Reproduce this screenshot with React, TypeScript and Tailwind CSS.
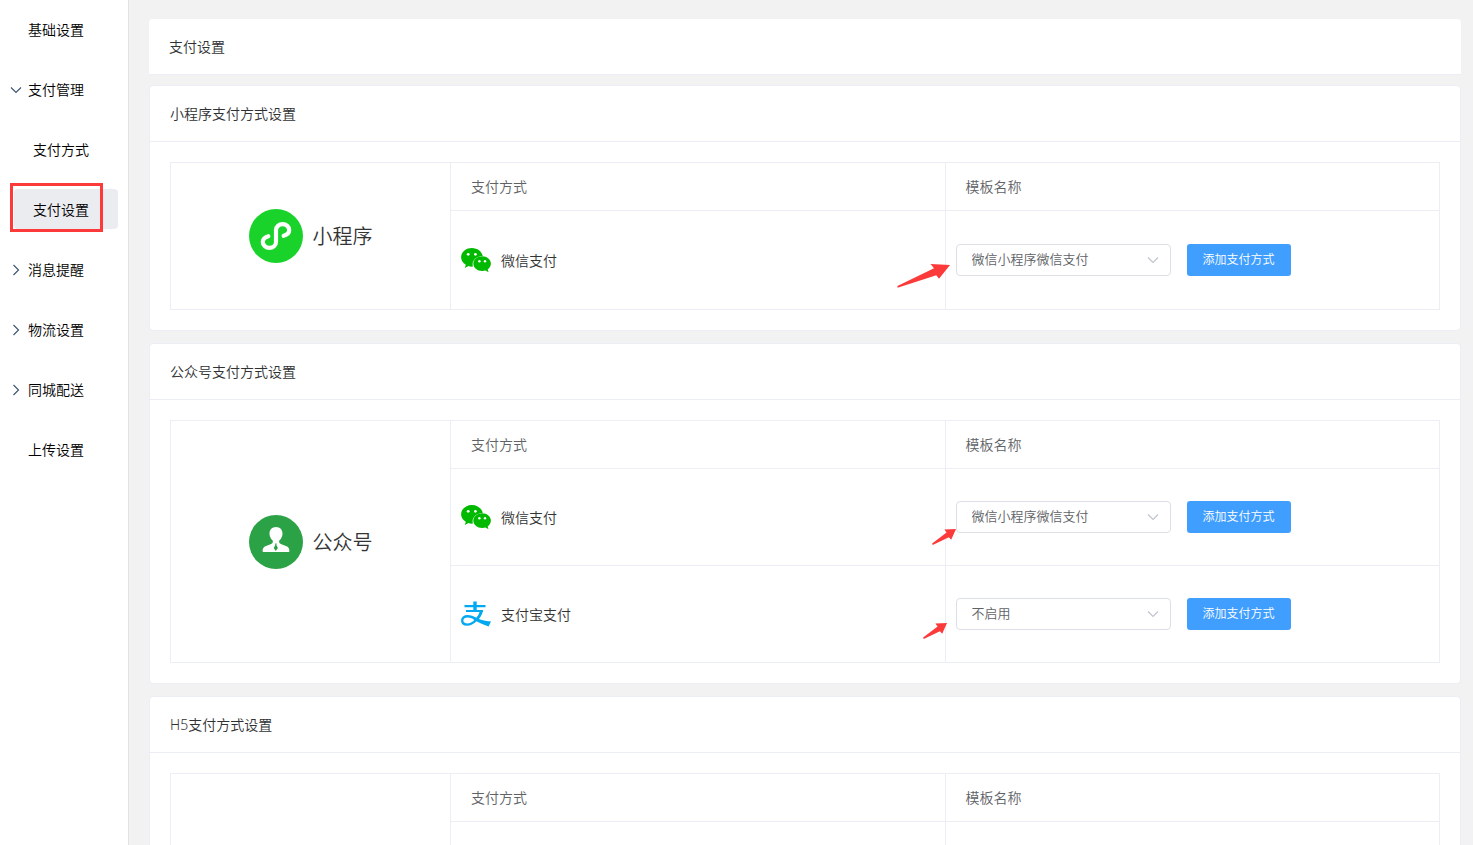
import { ReactNode } from "react";
import clsx from "clsx";

interface NavItem {
  label: string;
  chevron?: "down" | "right";
  child?: boolean;
  active?: boolean;
}

interface PayMethod {
  name: string;
  icon: ReactNode;
  template: string;
  arrow: "large" | "near" | "far";
}

interface Channel {
  title: string;
  label?: string;
  icon?: ReactNode;
  rowClass: string;
  methods: PayMethod[];
}

const navItems: NavItem[] = [
  { label: "基础设置" },
  { label: "支付管理", chevron: "down" },
  { label: "支付方式", child: true },
  { label: "支付设置", child: true, active: true },
  { label: "消息提醒", chevron: "right" },
  { label: "物流设置", chevron: "right" },
  { label: "同城配送", chevron: "right" },
  { label: "上传设置" },
];

const templates = ["微信小程序微信支付", "不启用"];

function Chevron({ className }: { className?: string }) {
  return (
    <svg viewBox="0 0 12 12" fill="none" stroke="currentColor" strokeWidth="1.2" className={clsx("size-3", className)}>
      <path d="M1 3.5 L6 8.5 L11 3.5" />
    </svg>
  );
}

function MiniProgramIcon() {
  return (
    <svg viewBox="0 0 54 54" className="size-[54px]">
      <circle cx="27" cy="27" r="27" fill="#19d32a" />
      <path
        d="M19.3 27.2 C15.8 28.2 13.8 30.3 13.8 33 C13.8 36.2 16.8 38.8 20.4 38.8 C24.1 38.8 27 36.2 27 33 V21 C27 17.8 29.9 15.2 33.6 15.2 C37.2 15.2 40.2 17.8 40.2 21 C40.2 23.7 38.2 25.8 34.7 26.8"
        fill="none"
        stroke="#fff"
        strokeWidth="4.2"
        strokeLinecap="round"
      />
    </svg>
  );
}

function OfficialAccountIcon() {
  return (
    <svg viewBox="0 0 54 54" className="size-[54px]">
      <circle cx="27" cy="27" r="27" fill="#2ba245" />
      <path
        d="M27 12 C30.9 12 33.5 14.8 33.5 18.4 C33.5 21.2 32.3 23.6 30.6 25.2 C29.8 26.2 30 27.8 31 28.4 C33.6 29.8 36.6 30.6 38.6 31.8 C40 32.8 40.4 34.6 40.4 36 C40.4 36.8 40 37.1 39.3 37.1 H14.7 C14 37.1 13.6 36.8 13.6 36 C13.6 34.6 14 32.8 15.4 31.8 C17.4 30.6 20.4 29.8 23 28.4 C24 27.8 24.2 26.2 23.4 25.2 C21.7 23.6 20.5 21.2 20.5 18.4 C20.5 14.8 23.1 12 27 12 Z"
        fill="#fff"
      />
      <path d="M26 28.4 H27.6 L27.4 30 L28.9 33 L26.8 36 L24.7 33 L26.3 30 Z" fill="#2ba245" />
    </svg>
  );
}

function WechatIcon() {
  return (
    <svg viewBox="0 0 30 26" className="h-[26px] w-[30px]">
      <path
        d="M10.9 1 C16.4 1 21 4.6 21.7 9 C16 9 11.6 12.8 11.6 17.2 C11.6 18.1 11.7 18.9 12 19.6 C10.6 19.8 8.9 19.6 7.4 19.1 L3.8 21 L4.8 17.8 C1.9 16 0.1 13.4 0.1 10.3 C0.1 5.2 4.9 1 10.9 1 Z"
        fill="#00b900"
      />
      <path
        d="M21.2 9.2 C26 9.2 29.9 12.5 29.9 16.6 C29.9 19 28.6 21.1 26.7 22.5 L27.5 25.2 L24.5 23.6 C23.5 23.9 22.3 24.1 21.2 24.1 C16.3 24.1 12.3 20.8 12.3 16.6 C12.3 12.5 16.3 9.2 21.2 9.2 Z"
        fill="#00b900"
      />
      <g fill="#fff">
        <circle cx="7.2" cy="7.3" r="1.4" />
        <circle cx="14.4" cy="7.3" r="1.4" />
        <circle cx="18.4" cy="14.3" r="1.2" />
        <circle cx="24" cy="14.3" r="1.2" />
      </g>
    </svg>
  );
}

function AlipayIcon() {
  return (
    <svg viewBox="0 0 30 26" fill="none" stroke="#02a9f1" className="h-[26px] w-[30px]">
      <path d="M3.5 5.2 H24.5 M5 10 H22" strokeWidth="2.2" />
      <path d="M14 0.5 V10" strokeWidth="3.4" />
      <path
        d="M20.4 10 C18.5 16.6 12.5 23.6 6 23.6 C2.8 23.6 1.2 22 1.2 19.6 C1.2 16.8 3.4 15.2 6.6 15.2 C10.8 15.2 14.5 17.6 18 19.4"
        strokeWidth="2.4"
      />
      <path d="M19.2 10 H22 C21.2 13 19.6 16 17.6 18.4 L15.2 17.4 C17.2 15 18.6 12.4 19.2 10 Z" fill="#02a9f1" stroke="none" />
      <path d="M12.6 16.2 C18 18.6 24 19.8 30 20.6 L27.6 25.6 C22 23.6 18 21.6 12.6 19 Z" fill="#02a9f1" stroke="none" />
    </svg>
  );
}

function Arrow({ className }: { className: string }) {
  return (
    <svg viewBox="0 0 53 24" className={clsx("pointer-events-none absolute", className)}>
      <path d="M53 1 L33.5 0 L37 4.2 L0.4 22 L0.6 23.8 L39.3 11.2 L42 14.8 Z" fill="#fc3a3a" />
    </svg>
  );
}

function SmallArrow({ className }: { className: string }) {
  return (
    <svg viewBox="0 0 24 16" className={clsx("pointer-events-none absolute h-4 w-6", className)}>
      <path d="M24 0 L12.4 0.5 L14.6 3.4 L0.1 14.4 L0.7 16 L16.9 8.2 L19.2 10.8 Z" fill="#fc3a3a" />
    </svg>
  );
}

const channels: Channel[] = [
  {
    title: "小程序支付方式设置",
    label: "小程序",
    icon: <MiniProgramIcon />,
    rowClass: "h-[99px]",
    methods: [{ name: "微信支付", icon: <WechatIcon />, template: "微信小程序微信支付", arrow: "large" }],
  },
  {
    title: "公众号支付方式设置",
    label: "公众号",
    icon: <OfficialAccountIcon />,
    rowClass: "h-[97px]",
    methods: [
      { name: "微信支付", icon: <WechatIcon />, template: "微信小程序微信支付", arrow: "near" },
      { name: "支付宝支付", icon: <AlipayIcon />, template: "不启用", arrow: "far" },
    ],
  },
  { title: "H5支付方式设置", rowClass: "h-[97px]", methods: [] },
];

function ChannelCard({ channel }: { channel: Channel }) {
  const rowCount = Math.max(channel.methods.length, 1);

  return (
    <section className="rounded border border-[#ebeef5] bg-white">
      <h2 className="border-b border-[#ebeef5] px-5 py-[17px] text-sm leading-[21px] text-[#303133]">{channel.title}</h2>
      <div className="p-5">
        <table className="w-full table-fixed text-sm">
          <colgroup>
            <col className="w-[280px]" />
            <col />
            <col />
          </colgroup>
          <tbody>
            <tr className="h-12">
              <th rowSpan={rowCount + 1} scope="rowgroup" className="border border-[#ebeef5] font-[350]">
                <div className="flex items-center justify-center gap-2.5 text-xl text-[#333]">
                  {channel.icon}
                  <span className="pt-0.5">{channel.label}</span>
                </div>
              </th>
              <th scope="col" className="border border-[#ebeef5] px-5 text-left font-[350] text-[#606266]">
                支付方式
              </th>
              <th scope="col" className="border border-[#ebeef5] px-5 text-left font-[350] text-[#606266]">
                模板名称
              </th>
            </tr>
            {channel.methods.map((method) => (
              <tr key={method.name} className={channel.rowClass}>
                <td className="border border-[#ebeef5] px-2.5">
                  <div className="flex items-center gap-2.5 text-[#333]">
                    {method.icon}
                    <span className="pt-0.5">{method.name}</span>
                  </div>
                </td>
                <td className="border border-[#ebeef5] px-2.5">
                  <div className="relative flex items-center gap-4">
                    <div className="relative w-[215px]">
                      <select
                        aria-label={`${channel.label}${method.name}`}
                        defaultValue={method.template}
                        className="block h-8 w-full appearance-none rounded border border-[#dcdfe6] bg-white pr-8 pb-0.5 pl-[15px] text-[13px] text-[#606266] outline-none"
                      >
                        {templates.map((name) => (
                          <option key={name}>{name}</option>
                        ))}
                      </select>
                      <Chevron className="pointer-events-none absolute top-2.5 right-3 text-[#c0c4cc]" />
                    </div>
                    <button type="button" className="h-8 rounded-[3px] bg-[#409eff] px-4 text-xs text-white">
                      添加支付方式
                    </button>
                    {method.arrow === "large" && <Arrow className="top-5 -left-[59px] h-6 w-[53px]" />}
                    {method.arrow === "near" && <SmallArrow className="top-7 -left-6" />}
                    {method.arrow === "far" && <SmallArrow className="top-[25px] -left-[33px]" />}
                  </div>
                </td>
              </tr>
            ))}
            {channel.methods.length === 0 && (
              <tr className={channel.rowClass}>
                <td className="border border-[#ebeef5]" />
                <td className="border border-[#ebeef5]" />
              </tr>
            )}
          </tbody>
        </table>
      </div>
    </section>
  );
}

export default function App() {
  return (
    <div className="flex h-screen bg-[#f2f2f2] font-['Noto_Sans','Noto_Sans_CJK_SC',sans-serif] font-[350]">
      {/* Sidebar */}
      <aside className="w-[129px] shrink-0 border-r border-[#e1e2e6] bg-white">
        <nav className="flex flex-col gap-5 py-[9px] pr-2.5 text-sm text-black">
          {navItems.map((item) => (
            <div key={item.label} className="relative flex">
              <a
                href="#"
                className={clsx(
                  "flex h-10 flex-1 items-center rounded pt-0.5",
                  item.child ? "ml-3.5 pl-[19px]" : "gap-1.5 pl-2.5",
                  item.active && "bg-[#ebecf0]"
                )}
              >
                {!item.child && (
                  <span className="size-3 text-[#3f5870]">
                    {item.chevron && <Chevron className={item.chevron === "right" ? "-rotate-90" : ""} />}
                  </span>
                )}
                {item.label}
              </a>
              {item.active && (
                <span className="pointer-events-none absolute -top-1.5 left-2.5 h-[49px] w-[93px] border-3 border-[#fc3a3a]" />
              )}
            </div>
          ))}
        </nav>
      </aside>

      {/* Main content */}
      <main className="min-w-0 flex-1 overflow-y-auto pt-[19px] pr-3 pb-5 pl-5 [scrollbar-width:none]">
        <h1 className="mb-2.5 rounded-t border-b border-[#ebeef5] bg-white px-5 py-[17px] text-sm leading-[21px] text-[#303133]">
          支付设置
        </h1>
        <div className="flex flex-col gap-3">
          {channels.map((channel) => (
            <ChannelCard key={channel.title} channel={channel} />
          ))}
        </div>
      </main>
    </div>
  );
}
